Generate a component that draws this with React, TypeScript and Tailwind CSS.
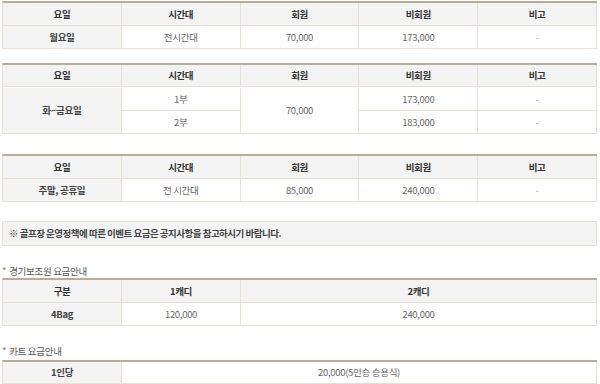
import React from "react";

const font = { fontFamily: '"Noto Sans CJK KR", "Noto Sans", sans-serif' };

const B = "border-r border-b border-[#e6e0d5]";

function H({ children, h = "h-[23px]" }: { children: React.ReactNode; h?: string }) {
  return (
    <div className={`${B} ${h} bg-[#f3f3f3] flex items-center justify-center font-bold text-[#333] text-[9.5px] tracking-[-0.4px]`}>
      {children}
    </div>
  );
}

function C({
  children,
  h = "h-[23px]",
  bold = false,
  dash = false,
  bg = "bg-white",
  extra = "",
}: {
  children: React.ReactNode;
  h?: string;
  bold?: boolean;
  dash?: boolean;
  bg?: string;
  extra?: string;
}) {
  const color = bold ? "font-bold text-[#444]" : dash ? "text-[#aaa]" : "text-[#666]";
  return (
    <div className={`${B} ${h} ${bg} flex items-center justify-center text-[9.5px] tracking-[-0.3px] ${color} ${extra}`}>
      {children}
    </div>
  );
}

const Heads = ({ h }: { h?: string }) => (
  <>
    <H h={h}>요일</H>
    <H h={h}>시간대</H>
    <H h={h}>회원</H>
    <H h={h}>비회원</H>
    <H h={h}>비고</H>
  </>
);

export default function App() {
  return (
    <div className="w-[600px] h-[384px] bg-white px-[2px] pr-[3px] overflow-hidden" style={font}>
      {/* Table 1 */}
      <div className="mt-[1px] grid grid-cols-5 border-t-2 border-t-[#b6ac9a] border-l border-l-[#e6e0d5]">
        <Heads h="h-[23px]" />
        <C bold bg="bg-[#f3f3f3]">월요일</C>
        <C>전시간대</C>
        <C>70,000</C>
        <C>173,000</C>
        <C dash>-</C>
      </div>

      {/* Table 2 */}
      <div className="mt-[14px] grid grid-cols-5 grid-rows-[23px_23px_23px] border-t-2 border-t-[#b6ac9a] border-l border-l-[#e6e0d5]">
        <Heads h="h-[22px]" />
        <C bold bg="bg-[#f3f3f3]" h="h-auto" extra="row-span-2">화~금요일</C>
        <C>1부</C>
        <C h="h-auto" extra="row-span-2">70,000</C>
        <C>173,000</C>
        <C dash>-</C>
        <C>2부</C>
        <C>183,000</C>
        <C dash>-</C>
      </div>

      {/* Table 3 */}
      <div className="mt-[20px] grid grid-cols-5 border-t-2 border-t-[#b6ac9a] border-l border-l-[#e6e0d5]">
        <Heads h="h-[23px]" />
        <C bold bg="bg-[#f3f3f3]">주말, 공휴일</C>
        <C>전 시간대</C>
        <C>85,000</C>
        <C>240,000</C>
        <C dash>-</C>
      </div>

      {/* Notice */}
      <div className="mt-[19px] h-[25px] border border-[#e6e0d5] bg-[#f3f3f3] flex items-center pl-[6px] text-[9.5px] font-bold text-[#444] tracking-[-0.5px]">
        ※ 골프장 운영정책에 따른 이벤트 요금은 공지사항을 참고하시기 바랍니다.
      </div>

      {/* Caddie label */}
      <div className="mt-[18px] h-[14px] flex items-center text-[9.5px] text-[#555] tracking-[-0.3px]">
        <span className="mr-[3px] text-[#777]">*</span>경기보조원 요금안내
      </div>
      <div className="grid grid-cols-[119px_119px_1fr] border-t-2 border-t-[#b6ac9a] border-l border-l-[#e6e0d5]">
        <H h="h-[23px]">구분</H>
        <H h="h-[23px]">1캐디</H>
        <H h="h-[23px]">2캐디</H>
        <C bold bg="bg-[#f3f3f3]">4Bag</C>
        <C>120,000</C>
        <C>240,000</C>
      </div>

      {/* Cart label */}
      <div className="mt-[18px] h-[14px] flex items-center text-[9.5px] text-[#555] tracking-[-0.3px]">
        <span className="mr-[3px] text-[#777]">*</span>카트 요금안내
      </div>
      <div className="mt-[2px] grid grid-cols-[119px_1fr] border-t-2 border-t-[#b6ac9a] border-l border-l-[#e6e0d5]">
        <C bold bg="bg-[#f3f3f3]" h="h-[22px]">1인당</C>
        <C h="h-[22px]">20,000(5인승 승용식)</C>
      </div>
    </div>
  );
}
